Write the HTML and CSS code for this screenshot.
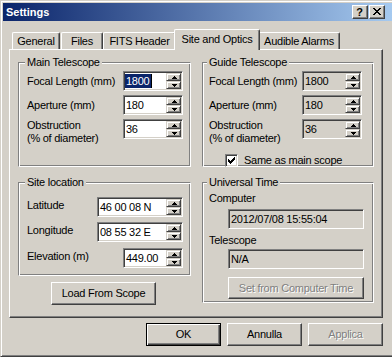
FILE: index.html
```html
<!DOCTYPE html>
<html lang="en">

<head>
    <meta charset="UTF-8">
    <title>Settings</title>
    <link rel="stylesheet" href="styles.css">
</head>

<body>
    <div class="window">
        <div class="titlebar">
            <span class="title">Settings</span>
            <div class="title-buttons">
                <span class="tbtn help">?</span>
                <span class="tbtn close">
                    <svg width="8" height="7" viewBox="0 0 8 7" shape-rendering="crispEdges">
                        <path d="M0 0h2v1h-2z M6 0h2v1h-2z M1 1h2v1h-2z M5 1h2v1h-2z M2 2h4v1h-4z M3 3h2v1h-2z M2 4h4v1h-4z M1 5h2v1h-2z M5 5h2v1h-2z M0 6h2v1h-2z M6 6h2v1h-2z" fill="#000"/>
                    </svg>
                </span>
            </div>
        </div>

        <div class="tabs">
            <div class="tab tab-general">General</div>
            <div class="tab tab-files">Files</div>
            <div class="tab tab-fits">FITS Header</div>
            <div class="tab tab-site active">Site and Optics</div>
            <div class="tab tab-alarms">Audible Alarms</div>
        </div>

        <div class="panel">
            <div class="col col-left">
                <div class="group group-main">
                    <div class="group-title">Main Telescope</div>
                    <div class="rows">
                        <div class="row">
                            <span class="lbl">Focal Length (mm)</span>
                            <div class="edit short">
                                <span class="sel">1800</span>
                                <div class="spinner">
                                    <span class="spin-btn"><svg width="5" height="3" viewBox="0 0 5 3" shape-rendering="crispEdges"><path d="M2 0h1v1h1v1h1v1h-5v-1h1v-1h1z"/></svg></span>
                                    <span class="spin-btn"><svg width="5" height="3" viewBox="0 0 5 3" shape-rendering="crispEdges"><path d="M0 0h5v1h-1v1h-1v1h-1v-1h-1v-1h-1z"/></svg></span>
                                </div>
                            </div>
                        </div>
                        <div class="row">
                            <span class="lbl">Aperture (mm)</span>
                            <div class="edit short">
                                <span class="val">180</span>
                                <div class="spinner">
                                    <span class="spin-btn"><svg width="5" height="3" viewBox="0 0 5 3" shape-rendering="crispEdges"><path d="M2 0h1v1h1v1h1v1h-5v-1h1v-1h1z"/></svg></span>
                                    <span class="spin-btn"><svg width="5" height="3" viewBox="0 0 5 3" shape-rendering="crispEdges"><path d="M0 0h5v1h-1v1h-1v1h-1v-1h-1v-1h-1z"/></svg></span>
                                </div>
                            </div>
                        </div>
                        <div class="row row-top">
                            <span class="lbl">Obstruction<br>(% of diameter)</span>
                            <div class="edit short">
                                <span class="val">36</span>
                                <div class="spinner">
                                    <span class="spin-btn"><svg width="5" height="3" viewBox="0 0 5 3" shape-rendering="crispEdges"><path d="M2 0h1v1h1v1h1v1h-5v-1h1v-1h1z"/></svg></span>
                                    <span class="spin-btn"><svg width="5" height="3" viewBox="0 0 5 3" shape-rendering="crispEdges"><path d="M0 0h5v1h-1v1h-1v1h-1v-1h-1v-1h-1z"/></svg></span>
                                </div>
                            </div>
                        </div>
                    </div>
                </div>

                <div class="group group-site">
                    <div class="group-title">Site location</div>
                    <div class="rows">
                        <div class="row row-top">
                            <span class="lbl lbl-site">Latitude</span>
                            <div class="edit long">
                                <span class="val">46 00 08 N</span>
                                <div class="spinner">
                                    <span class="spin-btn"><svg width="5" height="3" viewBox="0 0 5 3" shape-rendering="crispEdges"><path d="M2 0h1v1h1v1h1v1h-5v-1h1v-1h1z"/></svg></span>
                                    <span class="spin-btn"><svg width="5" height="3" viewBox="0 0 5 3" shape-rendering="crispEdges"><path d="M0 0h5v1h-1v1h-1v1h-1v-1h-1v-1h-1z"/></svg></span>
                                </div>
                            </div>
                        </div>
                        <div class="row row-top">
                            <span class="lbl lbl-site">Longitude</span>
                            <div class="edit long">
                                <span class="val">08 55 32 E</span>
                                <div class="spinner">
                                    <span class="spin-btn"><svg width="5" height="3" viewBox="0 0 5 3" shape-rendering="crispEdges"><path d="M2 0h1v1h1v1h1v1h-5v-1h1v-1h1z"/></svg></span>
                                    <span class="spin-btn"><svg width="5" height="3" viewBox="0 0 5 3" shape-rendering="crispEdges"><path d="M0 0h5v1h-1v1h-1v1h-1v-1h-1v-1h-1z"/></svg></span>
                                </div>
                            </div>
                        </div>
                        <div class="row row-top row-elev">
                            <span class="lbl">Elevation (m)</span>
                            <div class="edit short">
                                <span class="val">449.00</span>
                                <div class="spinner">
                                    <span class="spin-btn"><svg width="5" height="3" viewBox="0 0 5 3" shape-rendering="crispEdges"><path d="M2 0h1v1h1v1h1v1h-5v-1h1v-1h1z"/></svg></span>
                                    <span class="spin-btn"><svg width="5" height="3" viewBox="0 0 5 3" shape-rendering="crispEdges"><path d="M0 0h5v1h-1v1h-1v1h-1v-1h-1v-1h-1z"/></svg></span>
                                </div>
                            </div>
                        </div>
                    </div>
                </div>

                <button class="btn btn-load">Load From Scope</button>
            </div>

            <div class="col col-right">
                <div class="group group-guide">
                    <div class="group-title">Guide Telescope</div>
                    <div class="rows">
                        <div class="row">
                            <span class="lbl">Focal Length (mm)</span>
                            <div class="edit short disabled">
                                <span class="val">1800</span>
                                <div class="spinner">
                                    <span class="spin-btn"><svg width="5" height="3" viewBox="0 0 5 3" shape-rendering="crispEdges"><path d="M2 0h1v1h1v1h1v1h-5v-1h1v-1h1z"/></svg></span>
                                    <span class="spin-btn"><svg width="5" height="3" viewBox="0 0 5 3" shape-rendering="crispEdges"><path d="M0 0h5v1h-1v1h-1v1h-1v-1h-1v-1h-1z"/></svg></span>
                                </div>
                            </div>
                        </div>
                        <div class="row">
                            <span class="lbl">Aperture (mm)</span>
                            <div class="edit short disabled">
                                <span class="val">180</span>
                                <div class="spinner">
                                    <span class="spin-btn"><svg width="5" height="3" viewBox="0 0 5 3" shape-rendering="crispEdges"><path d="M2 0h1v1h1v1h1v1h-5v-1h1v-1h1z"/></svg></span>
                                    <span class="spin-btn"><svg width="5" height="3" viewBox="0 0 5 3" shape-rendering="crispEdges"><path d="M0 0h5v1h-1v1h-1v1h-1v-1h-1v-1h-1z"/></svg></span>
                                </div>
                            </div>
                        </div>
                        <div class="row row-top">
                            <span class="lbl">Obstruction<br>(% of diameter)</span>
                            <div class="edit short disabled">
                                <span class="val">36</span>
                                <div class="spinner">
                                    <span class="spin-btn"><svg width="5" height="3" viewBox="0 0 5 3" shape-rendering="crispEdges"><path d="M2 0h1v1h1v1h1v1h-5v-1h1v-1h1z"/></svg></span>
                                    <span class="spin-btn"><svg width="5" height="3" viewBox="0 0 5 3" shape-rendering="crispEdges"><path d="M0 0h5v1h-1v1h-1v1h-1v-1h-1v-1h-1z"/></svg></span>
                                </div>
                            </div>
                        </div>
                    </div>
                    <div class="check-row">
                        <span class="checkbox">
                            <svg width="7" height="7" viewBox="0 0 7 7" shape-rendering="crispEdges">
                                <path d="M6 0h1v1h-1z M5 1h2v1h-2z M0 2h1v1h-1z M4 2h3v1h-3z M0 3h2v1h-2z M3 3h3v1h-3z M0 4h5v1h-5z M1 5h3v1h-3z M2 6h1v1h-1z" fill="#000"/>
                            </svg>
                        </span>
                        <span>Same as main scope</span>
                    </div>
                </div>

                <div class="group group-ut">
                    <div class="group-title">Universal Time</div>
                    <div class="ut-label">Computer</div>
                    <div class="field">2012/07/08 15:55:04</div>
                    <div class="ut-label ut-label-tel">Telescope</div>
                    <div class="field field-tel">N/A</div>
                    <button class="btn btn-set" disabled>Set from Computer Time</button>
                </div>
            </div>
        </div>

        <div class="footer">
            <button class="btn btn-default">OK</button>
            <button class="btn">Annulla</button>
            <button class="btn" disabled>Applica</button>
        </div>
    </div>
</body>

</html>
```

FILE: styles.css
```css
* {
    margin: 0;
    padding: 0;
    box-sizing: border-box;
}

html,
body {
    width: 392px;
    height: 357px;
    overflow: hidden;
}

body {
    font-family: 'Liberation Sans', Arial, sans-serif;
    font-size: 11px;
    letter-spacing: -0.25px;
    color: #000;
    background: #d4d0c8;
}

.window {
    width: 396px;
    height: 357px;
    background: #d4d0c8;
    border: 1px solid;
    border-color: #d4d0c8 #404040 #404040 #d4d0c8;
    box-shadow: inset 1px 1px #fff, inset -1px -1px #808080;
    padding: 2px;
}

/* title bar */
.titlebar {
    height: 18px;
    background: linear-gradient(to right, #0a246a, #a6caf0);
    display: flex;
    align-items: center;
    justify-content: space-between;
    padding: 0 8px 0 3px;
}

.title {
    color: #fff;
    font-weight: bold;
    letter-spacing: 0;
    line-height: 13px;
}

.title-buttons {
    display: flex;
    gap: 1px;
}

.tbtn {
    width: 16px;
    height: 14px;
    background: #d4d0c8;
    border: 1px solid;
    border-color: #fff #404040 #404040 #fff;
    box-shadow: inset -1px -1px #808080;
    display: flex;
    align-items: center;
    justify-content: center;
}

.tbtn.help {
    font-weight: bold;
    font-size: 11px;
    line-height: 11px;
    letter-spacing: 0;
    padding-right: 1px;
}

.tbtn.close svg {
    margin: 0 1px 1px 0;
}

/* tabs */
.tabs {
    display: flex;
    align-items: flex-end;
    height: 20px;
    margin-top: 8px;
    padding-left: 9px;
}

.tab {
    height: 17px;
    padding-top: 2px;
    line-height: 13px;
    text-align: center;
    border: 1px solid;
    border-bottom: none;
    border-color: #fff #404040 #fff #fff;
    border-radius: 2px 2px 0 0;
    box-shadow: inset -1px 0 #808080;
    background: #d4d0c8;
}

.tab-general { width: 48px; margin-right: 1px; }
.tab-files { width: 42px; }
.tab-fits { width: 73px; }
.tab-site { width: 82px; }
.tab-alarms { width: 82px; }

.tab.active {
    position: relative;
    z-index: 1;
    width: 86px;
    height: 21px;
    padding-top: 3px;
    margin: 0 -2px -1px;
}

/* tab page */
.panel {
    margin-left: 6px;
    width: 374px;
    height: 269px;
    border: 1px solid;
    border-color: #fff #404040 #404040 #fff;
    box-shadow: inset -1px -1px #808080;
    padding: 12px 8px 0;
    display: flex;
    gap: 11px;
}

.col {
    display: flex;
    flex-direction: column;
}

.col-left { width: 173px; }
.col-right { width: 172px; }

.group {
    border: 1px solid;
    border-color: #808080 #fff #fff #808080;
    box-shadow: inset 1px 1px #fff, inset -1px -1px #808080;
}

.group-main,
.group-guide { height: 105px; }

.group-site {
    height: 94px;
    margin-top: 15px;
}

.group-ut {
    height: 121px;
    margin-top: 15px;
}

.group-title {
    width: fit-content;
    margin: -7px 0 0 6px;
    padding: 0 2px;
    line-height: 13px;
    background: #d4d0c8;
}

.group-guide .group-title,
.group-ut .group-title {
    margin-left: 4px;
}

.rows {
    display: flex;
    flex-direction: column;
    gap: 4px;
    margin-top: 2px;
    padding-left: 8px;
}

.group-guide .rows { padding-left: 6px; }

.group-site .rows {
    margin-top: 8px;
    gap: 5px;
}

.row {
    display: flex;
    align-items: center;
}

.row-top { align-items: flex-start; }

.row-elev { margin-top: 1px; }

.lbl {
    width: 96px;
    line-height: 13px;
}

.group-guide .lbl { width: 93px; }

.lbl-site {
    width: 70px;
    padding-top: 2px;
}

.row-elev .lbl { padding-top: 2px; }

/* sunken edit boxes */
.edit,
.field {
    height: 20px;
    background: #fff;
    border: 1px solid;
    border-color: #808080 #fff #fff #808080;
    box-shadow: inset 1px 1px #404040, inset -1px -1px #d4d0c8;
    padding: 1px 1px 1px 2px;
    display: flex;
    align-items: center;
    line-height: 14px;
}

.edit.short { width: 60px; }
.edit.long { width: 86px; }

.edit.disabled,
.field {
    background: #d4d0c8;
}

.sel {
    background: #0a246a;
    color: #fff;
    margin-left: -1px;
    padding: 0 2px 0 1px;
    border-right: 1px solid #000;
}

.spinner {
    margin-left: auto;
    width: 15px;
    height: 16px;
    display: flex;
    flex-direction: column;
}

.spin-btn {
    height: 8px;
    background: #d4d0c8;
    border: 1px solid;
    border-color: #d4d0c8 #404040 #404040 #d4d0c8;
    box-shadow: inset 1px 1px #fff, inset -1px -1px #808080;
    display: flex;
    align-items: center;
    justify-content: center;
}

.spin-btn svg {
    margin-left: 1px;
}

/* checkbox */
.check-row {
    display: flex;
    align-items: center;
    gap: 6px;
    margin: 9px 0 0 22px;
    line-height: 13px;
}

.checkbox {
    width: 13px;
    height: 13px;
    background: #fff;
    border: 1px solid;
    border-color: #808080 #fff #fff #808080;
    box-shadow: inset 1px 1px #404040, inset -1px -1px #d4d0c8;
    display: flex;
    align-items: center;
    justify-content: center;
}

/* universal time */
.ut-label {
    margin: 3px 0 0 6px;
    line-height: 13px;
}

.ut-label-tel { margin-top: 5px; }

.field {
    width: 136px;
    margin: 4px 0 0 25px;
}

.field-tel { margin-top: 2px; }

/* push buttons */
.btn {
    font-family: inherit;
    font-size: 11px;
    letter-spacing: -0.25px;
    color: #000;
    background: #d4d0c8;
    border: 1px solid;
    border-color: #fff #404040 #404040 #fff;
    box-shadow: inset -1px -1px #808080;
    height: 23px;
    width: 75px;
    line-height: 13px;
}

.btn:disabled {
    color: #808080;
    text-shadow: 1px 1px #fff;
}

.btn-default {
    border-color: #000;
    box-shadow: inset 1px 1px #fff, inset -1px -1px #404040, inset -2px -2px #808080;
}

.btn-load {
    width: 105px;
    margin: 6px 0 0 33px;
}

.btn-set {
    width: 136px;
    height: 22px;
    margin: 8px 0 0 25px;
}

.footer {
    display: flex;
    justify-content: flex-end;
    gap: 6px;
    margin-top: 5px;
    padding-right: 10px;
}
```
